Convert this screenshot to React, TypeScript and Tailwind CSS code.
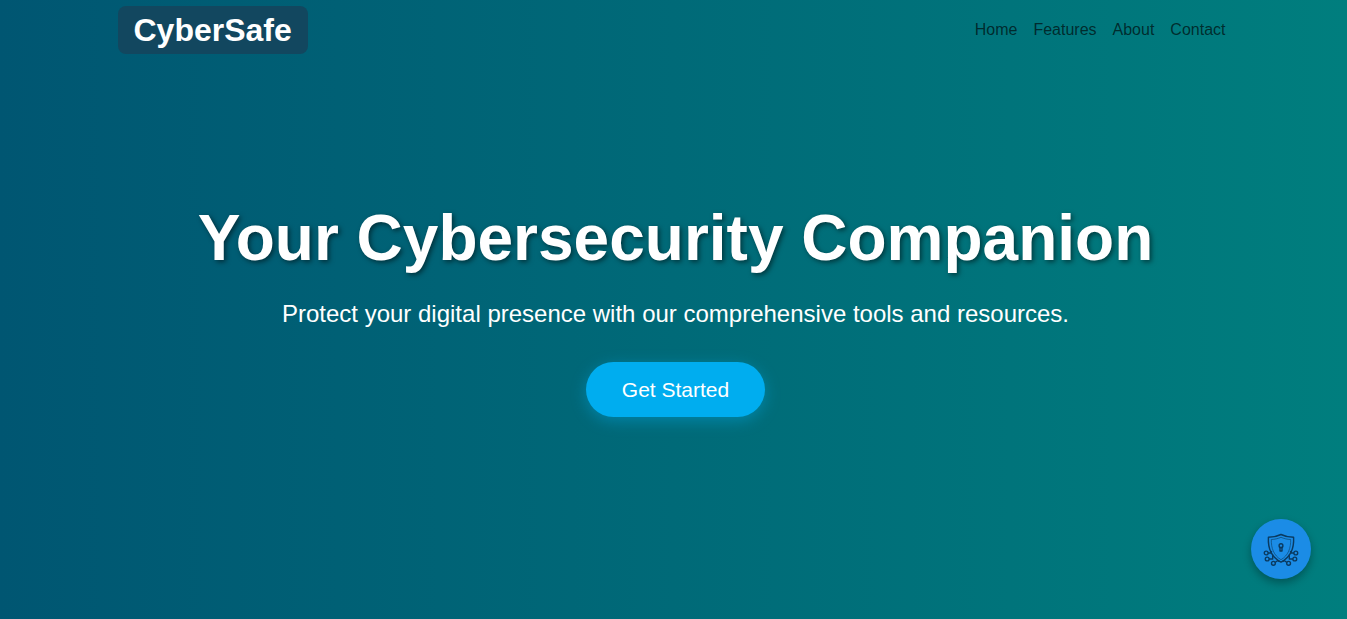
const links = ["Home", "Features", "About", "Contact"];

function ShieldIcon() {
  return (
    <svg
      viewBox="0 0 36 34"
      className="h-[34px] w-9"
      fill="none"
      stroke="#0a3a60"
      strokeWidth="1.4"
      strokeLinejoin="round"
      aria-hidden="true"
    >
      <path d="M18 2.500c4 2 8.300 2.800 12.600 2.800C31.200 16 28 25 18 30.200 8 25 4.800 16 5.400 5.300 9.700 5.300 14 4.500 18 2.500Z" />
      <path
        d="M18 5.300c3.300 1.400 6.300 2.100 9.700 2.200C27.900 16 25.300 23.500 18 27.700 10.700 23.500 8.100 16 8.300 7.500c3.400-.1 6.400-.8 9.700-2.200Z"
        strokeWidth=".6"
      />
      <circle cx="18" cy="13.700" r="1.900" />
      <path d="M17 15.500h2V19h-2z" />
      <path d="M5 21h2.500l1.300-1.800M6 27h3.700v-4.500M12 30.500l2.500-1.800 2 .8M31 21h-2.500l-1.300-1.800M30 27h-3.700v-4.500M24 30.500l-2.500-1.800-2 .8" />
      <circle cx="3.200" cy="21" r="1.900" />
      <circle cx="4.200" cy="27" r="1.900" />
      <circle cx="10.400" cy="31.300" r="1.900" />
      <circle cx="32.800" cy="21" r="1.900" />
      <circle cx="31.800" cy="27" r="1.900" />
      <circle cx="25.600" cy="31.300" r="1.900" />
    </svg>
  );
}

export default function App() {
  return (
    <div className="flex min-h-screen flex-col bg-linear-to-r/srgb from-[#005672] to-[#007e7e] pl-1 font-['Liberation_Sans',Arial,sans-serif] text-white">
      <header className="mx-auto flex w-full max-w-[1148px] flex-wrap items-center justify-between px-4 py-1.5">
        <a
          href="#home"
          className="rounded-lg bg-[#12475f] px-4 text-[32px] leading-[48px] font-bold"
        >
          CyberSafe
        </a>
        <nav aria-label="Main" className="flex flex-wrap">
          {links.map((label) => (
            <a
              key={label}
              href={`#${label.toLowerCase()}`}
              className="px-2 text-base text-black/65 hover:text-black"
            >
              {label}
            </a>
          ))}
        </nav>
      </header>

      <main className="flex grow flex-col items-center justify-center px-4 pb-[63px] text-center">
        <h1 className="text-[64px] leading-[77px] font-bold [text-shadow:2px_2px_5px_rgba(0,0,0,0.5)]">
          Your Cybersecurity Companion
        </h1>
        <p className="mt-[19px] text-2xl leading-9">
          Protect your digital presence with our comprehensive tools and resources.
        </p>
        <button
          type="button"
          className="mt-[30px] cursor-pointer rounded-full bg-[#00adef] px-9 py-3 text-[21px] leading-[31px] shadow-[0_4px_15px_rgba(0,173,239,0.4)]"
        >
          Get Started
        </button>
      </main>

      <button
        type="button"
        aria-label="Open security assistant"
        className="fixed right-9 bottom-10 flex size-[60px] cursor-pointer items-center justify-center rounded-full bg-[#1b8ce6] shadow-[0_4px_8px_rgba(0,0,0,0.3)]"
      >
        <ShieldIcon />
      </button>
    </div>
  );
}
